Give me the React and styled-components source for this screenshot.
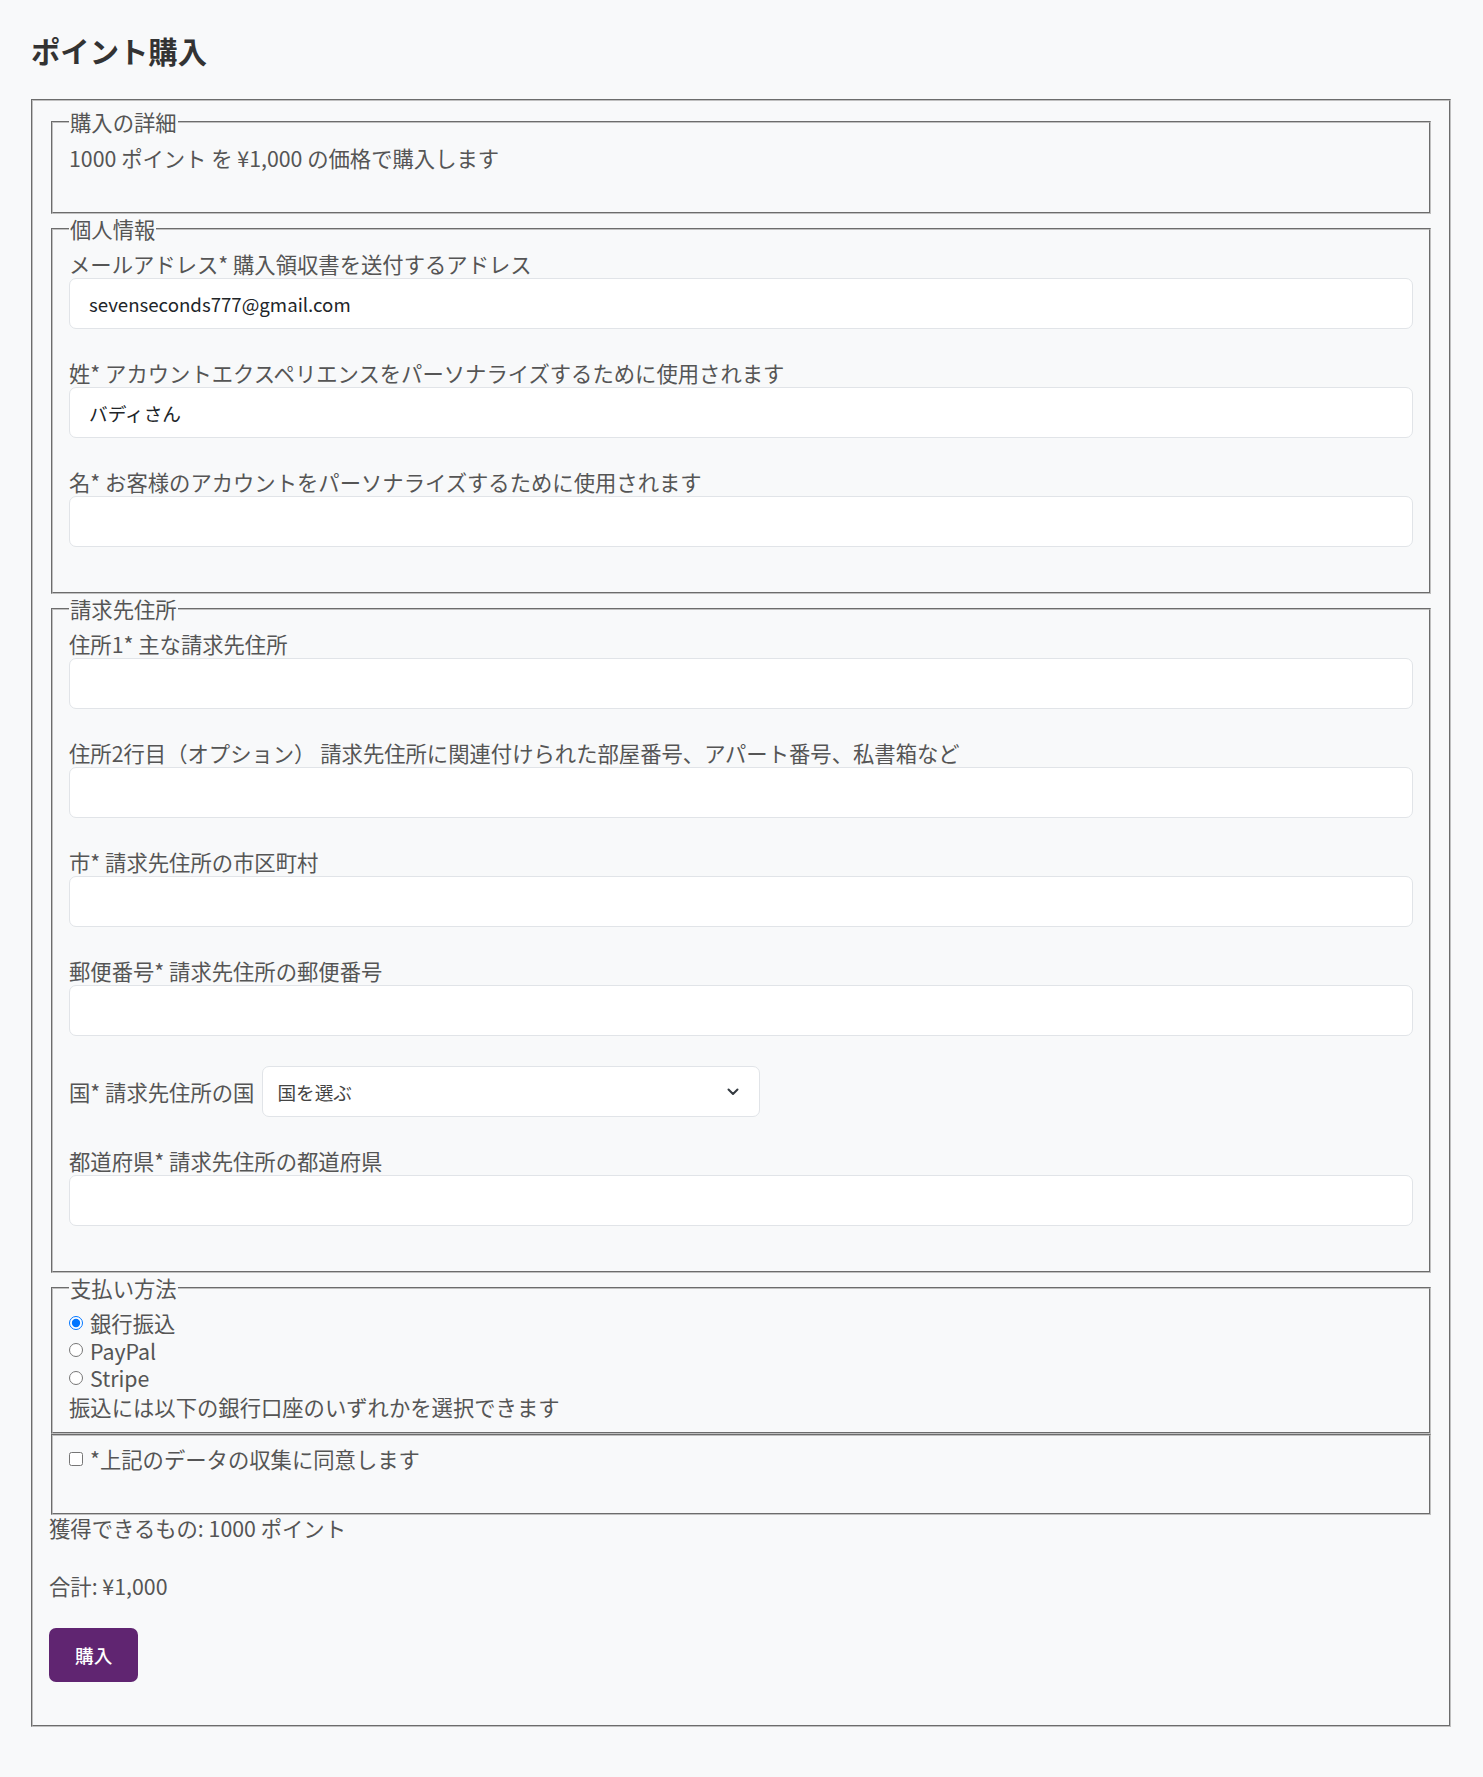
import React from 'react';
import styled, { createGlobalStyle } from 'styled-components';

const GlobalStyle = createGlobalStyle`
    html, body {
        margin: 0;
        background: #f8f9fa;
    }
    body {
        font-family: "Noto Sans CJK JP", "Noto Sans", sans-serif;
        color: #555;
    }
    * {
        box-sizing: border-box;
    }
`;

const Page = styled.div`
    padding: 32px 32px 50px 31px;
`;

const Title = styled.h1`
    margin: 0 0 31px;
    font-size: 29.33px;
    line-height: 36px;
    font-weight: 700;
    color: #333;
`;

const Form = styled.form`
    border: 2px groove rgb(192, 192, 192);
    padding: 6px 16px 13px;
`;

const Section = styled.fieldset`
    margin: 0 2px;
    min-width: 0;
    border: 2px groove rgb(192, 192, 192);
    padding: ${(props) => props.$pad || '6px 16px 15px'};
`;

const Legend = styled.legend`
    padding: 0 1px;
    font-size: 21.33px;
    line-height: 30px;
    color: #555;
`;

const Text = styled.p`
    margin: 0 0 ${(props) => props.$mb || '24px'};
    font-size: 21.33px;
    line-height: ${(props) => props.$lh || '30px'};
    color: #555;
`;

const Field = styled.div`
    margin-bottom: 30px;
`;

const InlineField = styled(Field)`
    display: flex;
    align-items: center;
    gap: 8px;
`;

const Label = styled.label`
    display: block;
    font-size: 21.33px;
    line-height: 28px;
    color: #555;
    white-space: nowrap;
`;

const Input = styled.input`
    display: block;
    width: 100%;
    height: 51px;
    padding: 0 19px;
    border: 1px solid #e1e4e8;
    border-radius: 7px;
    background: #fff;
    font-family: inherit;
    font-size: 18.67px;
    color: #212529;
    outline: none;
`;

const SelectWrap = styled.div`
    position: relative;
    width: 498px;
`;

const Select = styled.select`
    display: block;
    width: 100%;
    height: 51px;
    padding: 0 40px 0 14px;
    border: 1px solid #e1e4e8;
    border-radius: 7px;
    background: #fff;
    font-family: inherit;
    font-size: 18.67px;
    color: #444;
    appearance: none;
    outline: none;
`;

const Chevron = styled.svg`
    position: absolute;
    right: 21px;
    top: 50%;
    margin-top: -4px;
    pointer-events: none;
`;

const Option = styled.label`
    display: flex;
    align-items: center;
    margin-bottom: ${(props) => props.$mb || '0'};
    font-size: 21.33px;
    line-height: ${(props) => props.$lh || '27.5px'};
    color: #555;

    input {
        width: 14px;
        height: 14px;
        margin: 0 7px 0 0;
        accent-color: #0075ff;
    }
`;

const Summary = styled.p`
    margin: 0 0 ${(props) => props.$mb || '32px'};
    font-size: 21.33px;
    line-height: 26px;
    color: #555;
`;

const BuyButton = styled.button`
    display: block;
    height: 54px;
    padding: 0 26px;
    margin-bottom: 30px;
    border: none;
    border-radius: 7px;
    background: #602571;
    color: #fff;
    font-family: inherit;
    font-size: 18.67px;
    font-weight: 500;
    cursor: pointer;
`;

const fields1 = [
    { label: 'メールアドレス* 購入領収書を送付するアドレス', value: 'sevenseconds777@gmail.com' },
    { label: '姓* アカウントエクスペリエンスをパーソナライズするために使用されます', value: 'バディさん' },
    { label: '名* お客様のアカウントをパーソナライズするために使用されます', value: '' },
];

const fields2 = [
    '住所1* 主な請求先住所',
    '住所2行目（オプション） 請求先住所に関連付けられた部屋番号、アパート番号、私書箱など',
    '市* 請求先住所の市区町村',
    '郵便番号* 請求先住所の郵便番号',
];

const App = () => {
    return (
        <Page>
            <GlobalStyle />
            <Title>ポイント購入</Title>
            <Form onSubmit={(e) => e.preventDefault()}>
                <Section>
                    <Legend>購入の詳細</Legend>
                    <Text>1000 ポイント を ¥1,000 の価格で購入します</Text>
                </Section>

                <Section>
                    <Legend>個人情報</Legend>
                    {fields1.map((f) => (
                        <Field key={f.label}>
                            <Label>{f.label}</Label>
                            <Input type='text' defaultValue={f.value} />
                        </Field>
                    ))}
                </Section>

                <Section>
                    <Legend>請求先住所</Legend>
                    {fields2.map((l) => (
                        <Field key={l}>
                            <Label>{l}</Label>
                            <Input type='text' />
                        </Field>
                    ))}
                    <InlineField>
                        <Label>国* 請求先住所の国</Label>
                        <SelectWrap>
                            <Select defaultValue=''>
                                <option value=''>国を選ぶ</option>
                                <option value='jp'>日本</option>
                            </Select>
                            <Chevron width='12' height='8' viewBox='0 0 12 8'>
                                <path
                                    d='M1.5 1.5 6 6 10.5 1.5'
                                    fill='none'
                                    stroke='#343a40'
                                    strokeWidth='2'
                                    strokeLinecap='round'
                                    strokeLinejoin='round'
                                />
                            </Chevron>
                        </SelectWrap>
                    </InlineField>
                    <Field>
                        <Label>都道府県* 請求先住所の都道府県</Label>
                        <Input type='text' />
                    </Field>
                </Section>

                <Section $pad='6px 16px 11px'>
                    <Legend>支払い方法</Legend>
                    <Option>
                        <input type='radio' name='pay' defaultChecked />
                        銀行振込
                    </Option>
                    <Option>
                        <input type='radio' name='pay' />
                        PayPal
                    </Option>
                    <Option>
                        <input type='radio' name='pay' />
                        Stripe
                    </Option>
                    <Text $mb='0' $lh='29px'>振込には以下の銀行口座のいずれかを選択できます</Text>
                </Section>

                <Section $pad='8px 16px 14px'>
                    <Option $lh='30px' $mb='25px'>
                        <input type='checkbox' />
                        *上記のデータの収集に同意します
                    </Option>
                </Section>

                <Summary>獲得できるもの: 1000 ポイント</Summary>
                <Summary $mb='29px'>合計: ¥1,000</Summary>
                <BuyButton type='submit'>購入</BuyButton>
            </Form>
        </Page>
    );
};

export default App;
